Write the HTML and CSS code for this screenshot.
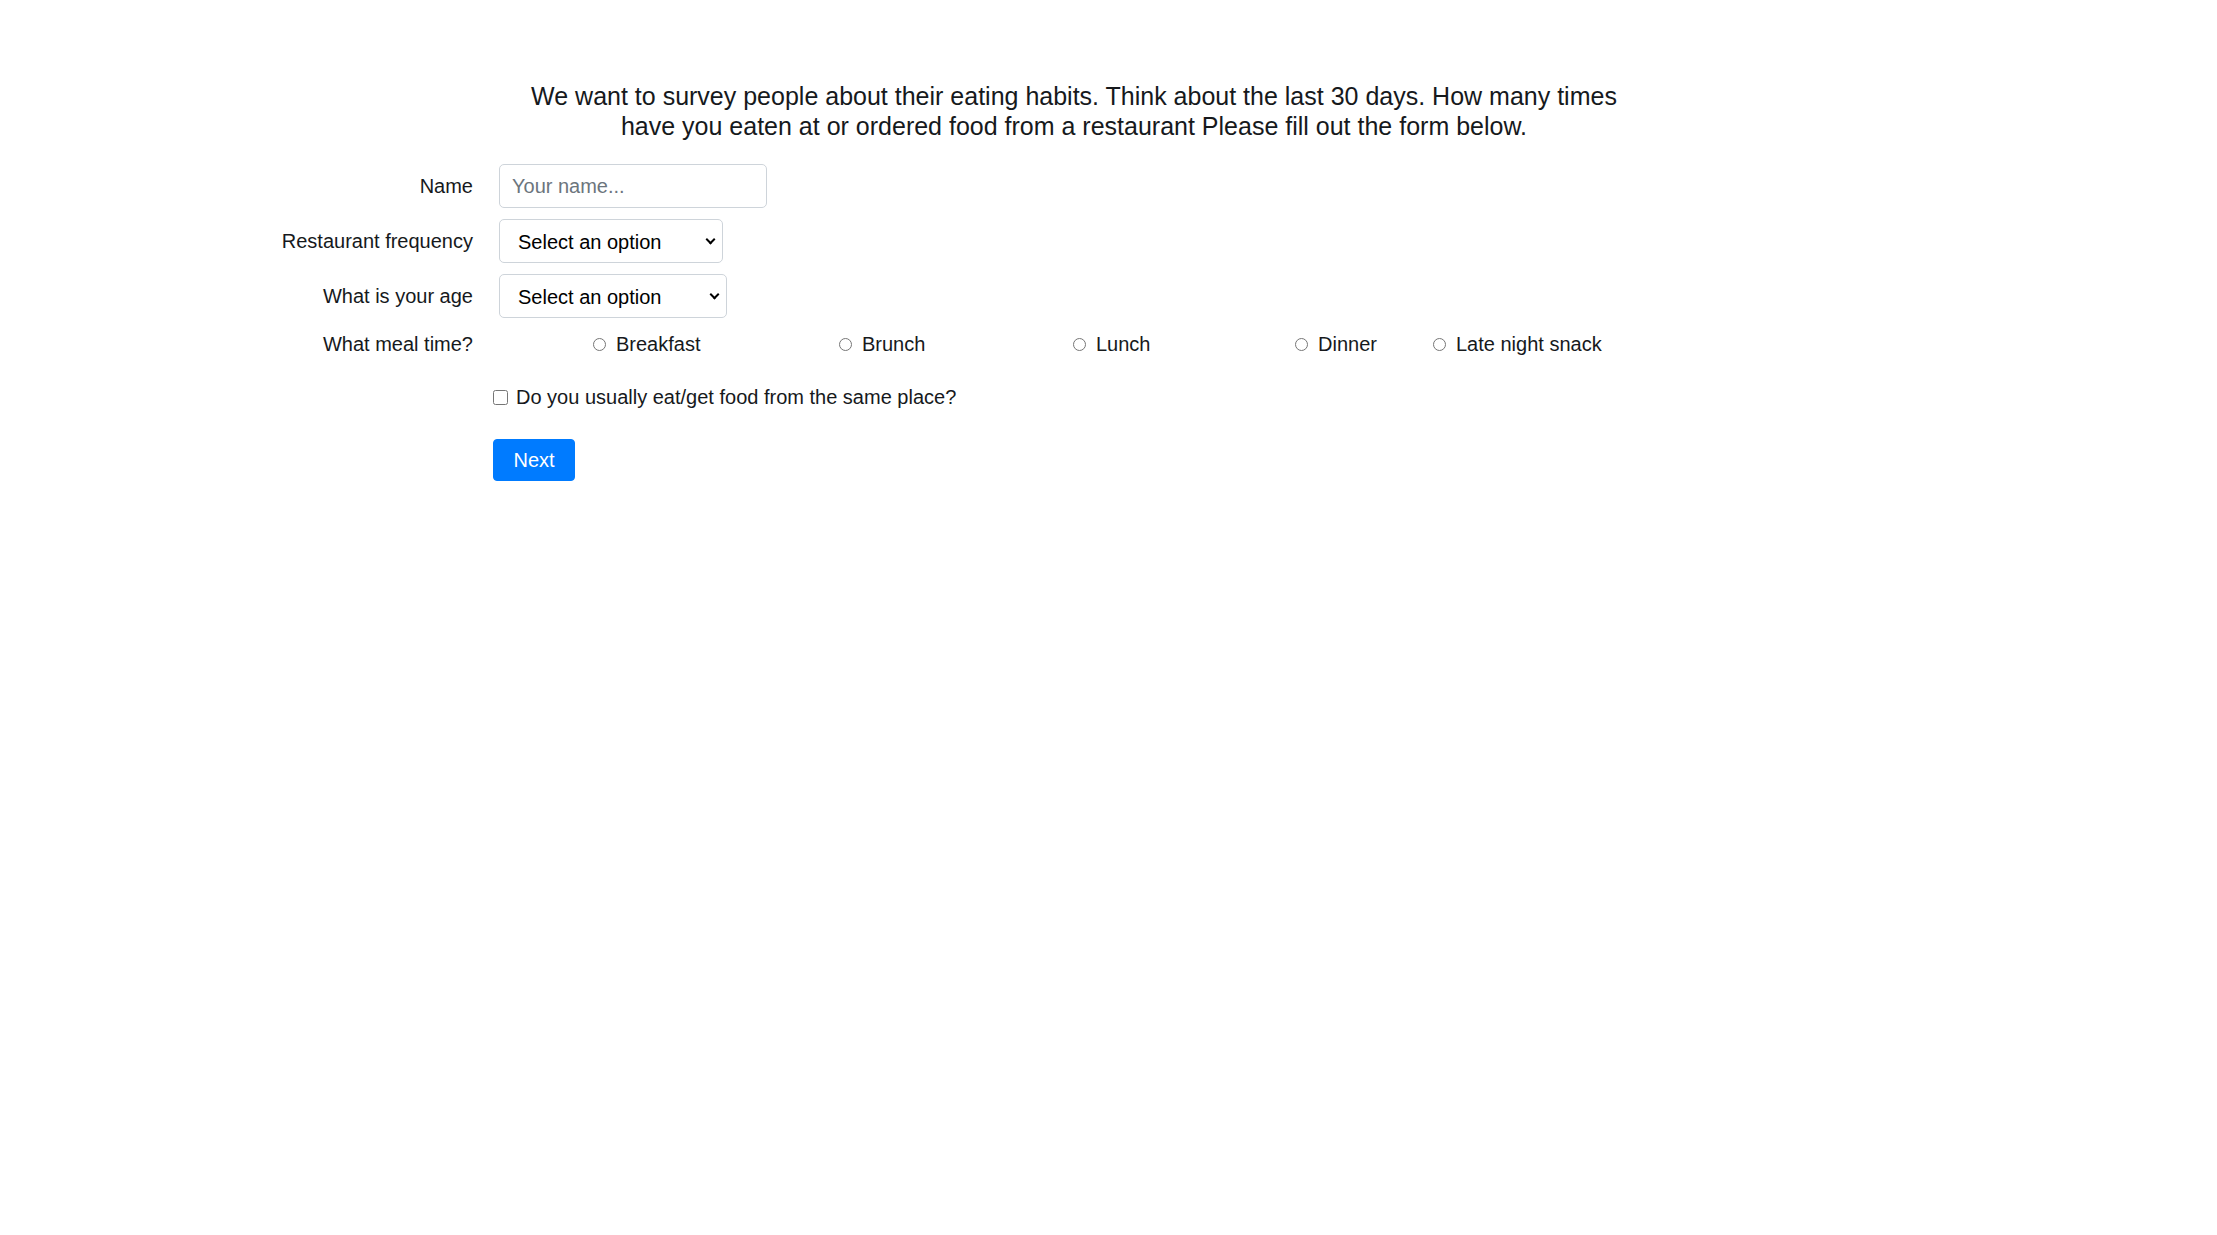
FILE: index.html
```html
<!DOCTYPE html>
<html lang="en">
  <head>
    <meta charset="UTF-8" />
    <meta name="viewport" content="width=device-width, initial-scale=1.0" />
    <title>Eating Habits Survey</title>
    <link rel="stylesheet" href="styles.css">
  </head>
  <body>
    <div class="survey">
      <h5 class="intro">
        We want to survey people about their eating habits. Think about the last 30 days. How many times
        have you eaten at or ordered food from a restaurant Please fill out the form below.
      </h5>

      <form class="survey-form">
        <!-- Name -->
        <div class="form-row">
          <label for="name">Name</label>
          <input type="text" id="name" class="name-input" placeholder="Your name..." />
        </div>

        <!-- Restaurant frequency -->
        <div class="form-row">
          <label for="frequency">Restaurant frequency</label>
          <div class="select-wrap freq">
            <select id="frequency">
              <option>Select an option</option>
              <option>Never</option>
              <option>1-3 times</option>
              <option>4-10 times</option>
              <option>More than 10 times</option>
            </select>
          </div>
        </div>

        <!-- Age -->
        <div class="form-row">
          <label for="age">What is your age</label>
          <div class="select-wrap age">
            <select id="age">
              <option>Select an option</option>
              <option>Under 18</option>
              <option>18-24</option>
              <option>25-34</option>
              <option>35-44</option>
              <option>45 and over</option>
            </select>
          </div>
        </div>

        <!-- Meal time -->
        <div class="form-row meal-row">
          <label>What meal time?</label>
          <div class="meal-options">
            <label class="radio"><input type="radio" name="meal" value="breakfast" /> Breakfast</label>
            <label class="radio"><input type="radio" name="meal" value="brunch" /> Brunch</label>
            <label class="radio"><input type="radio" name="meal" value="lunch" /> Lunch</label>
            <label class="radio"><input type="radio" name="meal" value="dinner" /> Dinner</label>
            <label class="radio"><input type="radio" name="meal" value="late" /> Late night snack</label>
          </div>
        </div>

        <div class="check-row">
          <label class="check"><input type="checkbox" id="same-place" /> Do you usually eat/get food from the same place?</label>
        </div>

        <div class="button-row">
          <button type="button" class="next-btn">Next</button>
        </div>
      </form>
    </div>
  </body>
</html>
```

FILE: styles.css
```css
/* General Styles */
body {
  font-family: "Liberation Sans", Arial, sans-serif;
  font-size: 20px;
  line-height: 30px;
  color: #16191c;
  margin: 0;
  padding: 0;
  background-color: #fff;
}

.survey {
  padding-top: 81px;
}

/* Intro text */
.intro {
  width: 1110px;
  margin: 0 0 23px 519px;
  font-size: 25px;
  font-weight: normal;
  line-height: 30px;
  text-align: center;
}

/* Form rows */
.survey-form {
  margin-left: 273px;
}

.form-row {
  display: grid;
  grid-template-columns: 200px auto;
  column-gap: 26px;
  align-items: center;
  justify-items: start;
  margin-bottom: 11px;
}

.form-row > label {
  justify-self: end;
}

.name-input {
  box-sizing: border-box;
  width: 268px;
  height: 44px;
  padding: 0 12px;
  font-family: inherit;
  font-size: 20px;
  color: #495057;
  border: 1px solid #ced4da;
  border-radius: 5px;
}

.name-input::placeholder {
  color: #6c757d;
}

/* Selects */
.select-wrap {
  position: relative;
}

.select-wrap select {
  box-sizing: border-box;
  height: 44px;
  padding: 1px 30px 0 18px;
  font-family: inherit;
  font-size: 20px;
  color: #000;
  background-color: #fff;
  border: 1px solid #ced4da;
  border-radius: 5px;
  appearance: none;
  -webkit-appearance: none;
}

.freq select {
  width: 224px;
}

.age select {
  width: 228px;
}

.select-wrap::after {
  content: "";
  position: absolute;
  right: 9px;
  top: 17px;
  width: 5px;
  height: 5px;
  border-right: 2px solid #000;
  border-bottom: 2px solid #000;
  transform: rotate(45deg);
  pointer-events: none;
}

/* Radio group */
.meal-row {
  margin-top: 5px;
  margin-bottom: 0;
}

.meal-options {
  display: grid;
  grid-template-columns: 246px 234px 222px 138px auto;
  padding-left: 94px;
}

.radio,
.check {
  display: flex;
  align-items: center;
  white-space: nowrap;
}

.radio input {
  width: 13px;
  height: 13px;
  margin: 0 10px 0 0;
}

/* Checkbox */
.check-row {
  margin-top: 23px;
  padding-left: 220px;
}

.check input {
  width: 15px;
  height: 15px;
  margin: 0 8px 0 0;
}

/* Button */
.button-row {
  margin-top: 27px;
  padding-left: 220px;
}

.next-btn {
  width: 82px;
  height: 42px;
  font-family: inherit;
  font-size: 20px;
  color: #fff;
  background-color: #007bff;
  border: 1px solid #007bff;
  border-radius: 4px;
  cursor: pointer;
}

.next-btn:hover {
  background-color: #0069d9;
}
```
